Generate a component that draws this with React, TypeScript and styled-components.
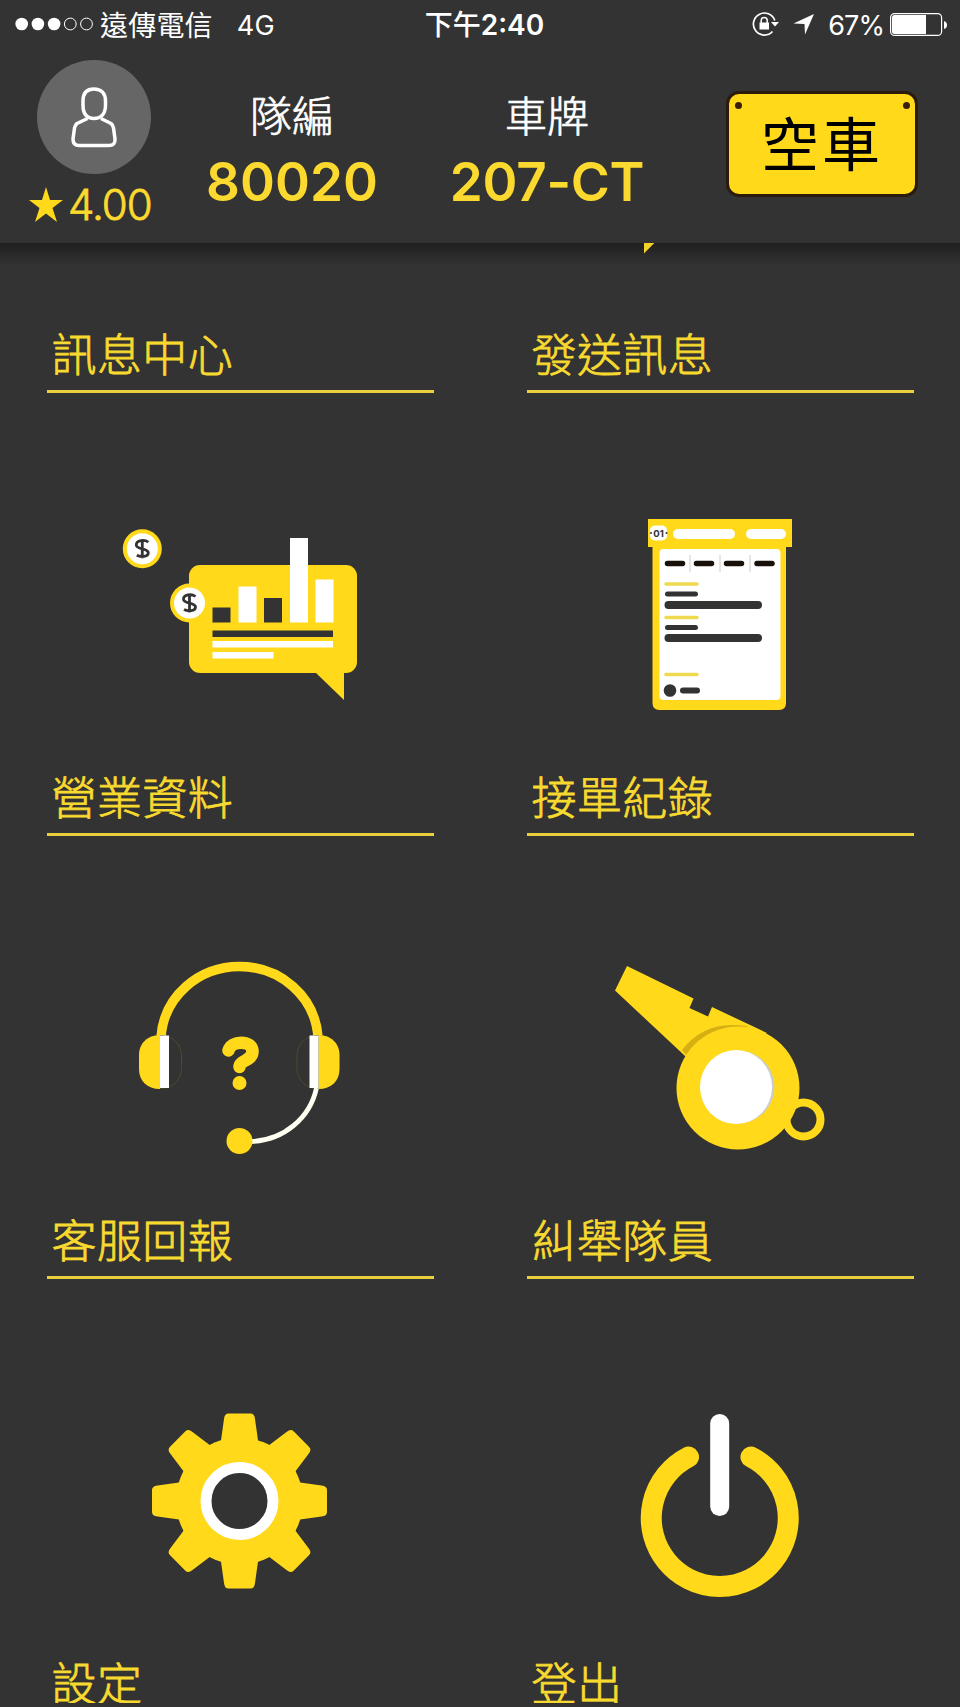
import React from 'react';
import styled, { createGlobalStyle } from 'styled-components';

const YELLOW = '#ffd91a';
const DARK = '#333333';
const cjk = '"Noto Sans CJK TC", sans-serif';
const latin = 'Inter, "Noto Sans CJK TC", sans-serif';

const GlobalStyle = createGlobalStyle`
  * { box-sizing: border-box; }
  body { margin: 0; background: ${DARK}; }
`;

const Screen = styled.div`
  width: 960px;
  height: 1707px;
  overflow: hidden;
  display: flex;
  flex-direction: column;
  padding-bottom: 4px;
  background: ${DARK};
  color: #fff;
  font-family: ${latin};
`;

const StatusBar = styled.div`
  height: 48px;
  flex: none;
  display: grid;
  grid-template-columns: 1fr auto 1fr;
  align-items: center;
  padding: 0 13px 0 15px;
  white-space: nowrap;
  line-height: 1;
`;

const StatusGroup = styled.div<{ $end?: boolean }>`
  display: flex;
  align-items: center;
  justify-content: ${(p) => (p.$end ? 'flex-end' : 'flex-start')};
`;

const Carrier = styled.span`
  font: 400 28px/40px ${cjk};
  margin: 0 24px 1px 6px;
  letter-spacing: 0.2px;
`;

const Network = styled.span`
  font-size: 27px;
  letter-spacing: 0.3px;
  padding-top: 2px;
`;

const Time = styled.div`
  font-size: 28px;
  font-weight: 600;
  line-height: 40px;
  padding: 1px 0 0 7px;
`;

const TimePrefix = styled.span`
  font: 500 28px/38px ${cjk};
`;

const Percent = styled.span`
  font-size: 27px;
  letter-spacing: -0.9px;
  margin: 0 6px 0 12px;
  padding-top: 2px;
`;

const Header = styled.header`
  height: 195px;
  flex: none;
  display: flex;
  align-items: flex-start;
`;

const Profile = styled.div`
  width: 177px;
  padding: 12px 0 0 29px;
`;

const Avatar = styled.div`
  width: 114px;
  height: 114px;
  margin-left: 8px;
  border-radius: 50%;
  background: #666;
`;

const Rating = styled.div`
  display: flex;
  align-items: center;
  gap: 5px;
  height: 60px;
  color: #fbd92e;
  font-size: 42px;
  font-weight: 300;
  letter-spacing: -1px;
  -webkit-text-stroke: 0.8px #fbd92e;
`;

const Info = styled.div<{ $width: number }>`
  width: ${(p) => p.$width}px;
  padding-top: 36px;
  display: flex;
  flex-direction: column;
  align-items: center;
`;

const InfoLabel = styled.span`
  font: 300 42px/60px ${cjk};
  -webkit-text-stroke: 0.7px #fff;
`;

const InfoValue = styled.span<{ $spacing: number }>`
  height: 70px;
  line-height: 76px;
  font-size: 53px;
  font-weight: 600;
  letter-spacing: ${(p) => p.$spacing}px;
  color: #fbd92e;
  white-space: nowrap;
`;

const PlateButton = styled.button`
  width: 192px;
  height: 106px;
  margin: 43px 0 0 39px;
  padding: 0;
  display: grid;
  grid-template-columns: 18px 1fr 18px;
  border: 3px solid #2b1b0b;
  border-radius: 13px;
  background: ${YELLOW};
  color: #000;
`;

const PlateText = styled.span`
  font: 400 58px/94px ${cjk};
  letter-spacing: 3px;
  white-space: nowrap;
  justify-self: center;
`;

const Rivet = styled.i`
  width: 7px;
  height: 7px;
  border-radius: 50%;
  background: #3a1e08;
  margin-top: 8px;
  justify-self: center;
`;

const MenuViewport = styled.main`
  flex: 1;
  min-height: 0;
  overflow: hidden;
  background: linear-gradient(#202020 0, #252525 7px, #2c2c2c 14px, ${DARK} 23px);
`;

const MenuGrid = styled.div`
  margin-top: -293px;
  display: grid;
  grid-template-columns: 480px 480px;
  grid-auto-rows: 443px;
`;

const Tile = styled.a`
  display: flex;
  flex-direction: column;
  align-items: center;
  color: #f8d92f;
`;

const TileLabel = styled.div`
  width: 387px;
  height: 76px;
  padding: 2px 0 0 5px;
  border-bottom: 3px solid #e9cf3b;
  font: 300 45px/68px ${cjk};
  letter-spacing: 0.4px;
  -webkit-text-stroke: 0.8px #f8d92f;
`;

const TileIcon = ({ x, y, children }: { x: number; y: number; children?: React.ReactNode }) => (
  <svg width="480" height="367" viewBox={`${x} ${y} 480 367`}>
    {children}
  </svg>
);

const Coin = ({ x, y }: { x: number; y: number }) => (
  <g transform={`translate(${x} ${y})`}>
    <circle r="19.5" fill={YELLOW} />
    <circle r="15.5" fill="#fff" />
    <path
      d="M6-6.5C2-9.5-6-8.5-6-3.8C-6 1 6-.8 6 4C6 8.5-2 8.5-5.5 6.5M0-9.5V9.5"
      fill="none"
      stroke={DARK}
      strokeWidth="2.8"
    />
  </g>
);

const BusinessIcon = () => (
  <TileIcon x={0} y={393}>
    <rect x="189" y="565" width="168" height="108" rx="11" fill={YELLOW} />
    <path d="M316 673H344V700Z" fill={YELLOW} />
    <g fill={DARK}>
      <rect x="212.500" y="607.500" width="18" height="15" />
      <rect x="264" y="598" width="18" height="24.500" />
      <rect x="212.500" y="630.500" width="120.500" height="6.500" />
    </g>
    <g fill="#fff">
      <rect x="238.500" y="586.500" width="18" height="36" />
      <rect x="290" y="538" width="18" height="84.500" />
      <rect x="315.500" y="579.500" width="18" height="43" />
      <rect x="212.500" y="641" width="120.500" height="6.500" />
      <rect x="212.500" y="652" width="61" height="6.500" />
    </g>
    <Coin x={142.3} y={548.7} />
    <Coin x={189.5} y={603} />
  </TileIcon>
);

const RecordsIcon = () => (
  <TileIcon x={480} y={393}>
    <path d="M652.500 546H786V703q0 7-7 7H659.500q-7 0-7-7Z" fill={YELLOW} />
    <rect x="648" y="519" width="144" height="28" fill={YELLOW} />
    <rect x="659.500" y="549" width="121" height="151" rx="4" fill="#fff" />
    <rect x="650" y="525.500" width="17" height="15" rx="5" fill="#fff" />
    <text x="658.500" y="537" textAnchor="middle" fontFamily="Inter" fontWeight="700" fontSize="9.500" fill={DARK}>01</text>
    <circle cx="651" cy="533" r="1" fill={DARK} />
    <circle cx="666.500" cy="533" r="1" fill={DARK} />
    <rect x="673" y="529" width="62" height="10" rx="5" fill="#fff" />
    <rect x="746" y="529" width="40" height="10" rx="5" fill="#fff" />
    <path d="M690 555v17M720 555v17M750 555v17" stroke="#ccc" strokeWidth="1" />
    <path d="M667.500 563.500h15M696.500 563.500h15M726.500 563.500h15M757 563.500h15" stroke="#17110a" strokeWidth="5.500" strokeLinecap="round" />
    <path d="M666 584h31M666 617.500h31M666 674.500h31" stroke="#eed94f" strokeWidth="3.500" strokeLinecap="round" />
    <path d="M667.500 594h28M667.500 627.500h28" stroke={DARK} strokeWidth="5" strokeLinecap="round" />
    <path d="M668.500 605h89.500M668.500 638h89.500" stroke={DARK} strokeWidth="8" strokeLinecap="round" />
    <circle cx="670" cy="690.500" r="6.300" fill={DARK} />
    <path d="M683 690.500h14" stroke={DARK} strokeWidth="6" strokeLinecap="round" />
  </TileIcon>
);

const SupportIcon = () => (
  <TileIcon x={0} y={836}>
    <path d="M161 1037C164 996 199 966.500 239.500 966.500S315 996 318 1037" fill="none" stroke={YELLOW} strokeWidth="9.500" />
    <rect x="139.500" y="1035.500" width="42" height="53" rx="20" fill="none" stroke="#50492d" />
    <rect x="297" y="1035.500" width="42" height="53" rx="20" fill="none" stroke="#50492d" />
    <path d="M160 1035c-13 0-21 9-21 20v14c0 12 8 20 21 20Z" fill={YELLOW} />
    <path d="M318.500 1035c13 0 21 9 21 20v14c0 12-8 20-21 20Z" fill={YELLOW} />
    <path d="M160 1035.500h9v52.500h-9ZM309.500 1035.500h9v52.500h-9Z" fill="#fff" />
    <path d="M316.500 1088C310 1118 284 1140 252 1141.500" fill="none" stroke="#fffff2" strokeWidth="4.800" />
    <circle cx="239.500" cy="1141" r="13" fill={YELLOW} />
    <path d="M228.500 1050.500C231 1040 252 1040 252.500 1051C253 1061 239.500 1060 239.500 1067" fill="none" stroke={YELLOW} strokeWidth="12.500" strokeLinecap="round" strokeLinejoin="round" />
    <circle cx="239.500" cy="1083" r="7" fill={YELLOW} />
  </TileIcon>
);

const WhistleIcon = () => (
  <TileIcon x={480} y={836}>
    <path d="M627 966L693.500 998.500L689.500 1008L708 1016.500L712 1007L767 1033L700 1070L615 990.500Z" fill={YELLOW} />
    <path d="M682 1050Q706 1019 748 1026.500L686 1055Z" fill="#d6b013" />
    <circle cx="738" cy="1088" r="61.500" fill={YELLOW} />
    <circle cx="803.500" cy="1119.500" r="17" fill="none" stroke={YELLOW} strokeWidth="8" />
    <circle cx="738" cy="1087" r="36.500" fill="#ccc" />
    <ellipse cx="736" cy="1087" rx="36" ry="37" fill="#fff" />
  </TileIcon>
);

const tooth = 'M-19-57L-15.500-82Q-15-87.500-11-87.500H11Q15-87.500 15.500-82L19-57Z';

const SettingsIcon = () => (
  <TileIcon x={0} y={1279}>
    <g transform="translate(239.500 1501)">
      <circle r="63.500" fill={YELLOW} />
      {[0, 45, 90, 135, 180, 225, 270, 315].map((angle) => (
        <path key={angle} d={tooth} transform={`rotate(${angle})`} fill={YELLOW} />
      ))}
      <circle r="33.500" fill={DARK} stroke="#fff" strokeWidth="11" />
    </g>
  </TileIcon>
);

const LogoutIcon = () => (
  <TileIcon x={480} y={1279}>
    <path d="M688.500 1457A68.500 68.500 0 1 0 751 1457" fill="none" stroke={YELLOW} strokeWidth="21" strokeLinecap="round" />
    <path d="M719.700 1423.500V1506.500" stroke="#fff" strokeWidth="19" strokeLinecap="round" />
  </TileIcon>
);

const SendIcon = () => (
  <TileIcon x={480} y={-50}>
    <path d="M644 215H682L644 253.500Z" fill="#f5d12c" />
  </TileIcon>
);

const InboxIcon = () => <TileIcon x={0} y={-50} />;

const menu = [
  { label: '訊息中心', Icon: InboxIcon },
  { label: '發送訊息', Icon: SendIcon },
  { label: '營業資料', Icon: BusinessIcon },
  { label: '接單紀錄', Icon: RecordsIcon },
  { label: '客服回報', Icon: SupportIcon },
  { label: '糾舉隊員', Icon: WhistleIcon },
  { label: '設定', Icon: SettingsIcon },
  { label: '登出', Icon: LogoutIcon },
];

const SignalDots = () => (
  <svg width="79" height="14" viewBox="0 0 79 14">
    {[0, 1, 2].map((i) => <circle key={i} cx={6.7 + i * 16.2} cy="7" r="6.300" fill="#fff" />)}
    {[3, 4].map((i) => <circle key={i} cx={6.7 + i * 16.2} cy="7" r="5.900" fill="none" stroke="#fff" />)}
  </svg>
);

const StatusIcons = () => (
  <svg width="64" height="26" viewBox="752 11 64 26" fill="none">
    <path d="M774.800 20.500A11 11 0 1 0 772.500 31.500" stroke="#fff" strokeWidth="1.700" />
    <path d="M771 22H779L775 26.500Z" fill="#fff" />
    <rect x="759.500" y="22.500" width="9.500" height="7" fill="#fff" />
    <path d="M761.200 23V20.500a3 3 0 0 1 6 0V23" stroke="#fff" strokeWidth="1.500" />
    <path d="M814 14L805 34.500L804.500 24L793.500 23.500Z" fill="#fff" />
  </svg>
);

const Battery = () => (
  <svg width="57" height="23" viewBox="890 12 57 23">
    <rect x="890.600" y="12.600" width="51" height="21.800" rx="4" fill="none" stroke="#fff" strokeWidth="1.200" />
    <path d="M926 14V33H894.500Q892 33 892 30.500V16.500Q892 14 894.500 14Z" fill="#fff" />
    <path d="M944 20q3 1 3 4t-3 4Z" fill="#fff" />
  </svg>
);

export default function App() {
  return (
    <Screen>
      <GlobalStyle />
      <StatusBar>
        <StatusGroup>
          <SignalDots />
          <Carrier>遠傳電信</Carrier>
          <Network>4G</Network>
        </StatusGroup>
        <Time><TimePrefix>下午</TimePrefix>2:40</Time>
        <StatusGroup $end>
          <StatusIcons />
          <Percent>67%</Percent>
          <Battery />
        </StatusGroup>
      </StatusBar>
      <Header>
        <Profile>
          <Avatar>
            <svg width="114" height="114" viewBox="37 60 114 114" fill="none" stroke="#fff" strokeWidth="3.500" strokeLinejoin="round">
              <path d="M83 101C83 93 87 89 94 89S105.500 93 105.500 101V105C105.500 114 101 118.500 94 118.500S83 114 83 105Z" />
              <path d="M87.500 118.500L77 123.500Q75 125 74.500 128L73 139Q73 145.500 79 145.500H109Q115.500 145.500 115 139L113.500 128Q113 125 111 123.500L101 118.500" />
            </svg>
          </Avatar>
          <Rating>
            <svg width="34" height="35" viewBox="0 0 34 35">
              <path d="M17 0L21 13H34L23.500 21L28 35L17 26.500L6 35L10.500 21L0 13H13Z" fill={YELLOW} />
            </svg>
            4.00
          </Rating>
        </Profile>
        <Info $width={230}>
          <InfoLabel>隊編</InfoLabel>
          <InfoValue $spacing={0}>80020</InfoValue>
        </Info>
        <Info $width={280}>
          <InfoLabel>車牌</InfoLabel>
          <InfoValue $spacing={-0.3}>207-CT</InfoValue>
        </Info>
        <PlateButton>
          <Rivet />
          <PlateText>空車</PlateText>
          <Rivet />
        </PlateButton>
      </Header>
      <MenuViewport>
        <MenuGrid>
          {menu.map(({ label, Icon }) => (
            <Tile key={label}>
              <Icon />
              <TileLabel>{label}</TileLabel>
            </Tile>
          ))}
        </MenuGrid>
      </MenuViewport>
    </Screen>
  );
}
